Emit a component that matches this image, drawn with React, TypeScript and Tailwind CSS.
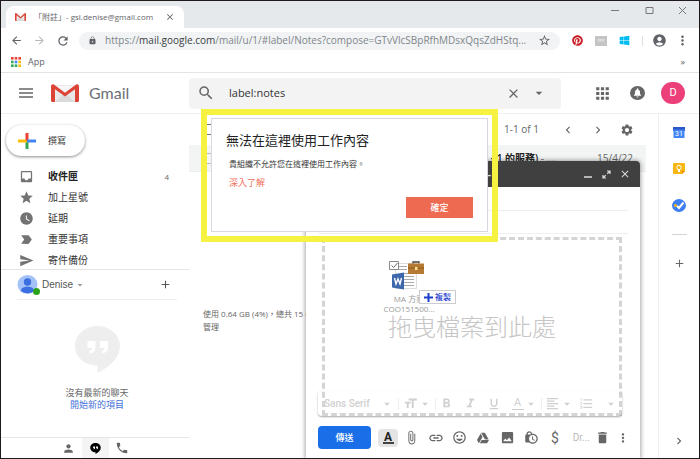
import type { ReactNode } from "react";
import {
  MdAccountCircle, MdAdd, MdApps, MdArrowBack, MdArrowDropDown, MdArrowForward, MdAttachFile,
  MdChevronLeft, MdChevronRight, MdClose, MdDelete, MdFormatAlignLeft, MdFormatBold,
  MdFormatItalic, MdFormatListNumbered, MdFormatSize, MdFormatUnderlined, MdImage, MdInbox,
  MdLabelImportant, MdLink, MdLock, MdLockClock, MdMoreVert, MdOutlineInsertEmoticon, MdPerson,
  MdPhone, MdRefresh, MdSearch, MdSend, MdSettings, MdStar, MdStarBorder, MdWatchLater,
} from "react-icons/md";
import { FaGoogleDrive, FaPinterest, FaWindows } from "react-icons/fa";

const UI = "font-['Open_Sans','Noto_Sans_CJK_TC',sans-serif]";

function IconButton({ label, className = "", children }: { label: string; className?: string; children: ReactNode }) {
  return (
    <button type="button" aria-label={label} className={`flex shrink-0 items-center justify-center ${className}`}>
      {children}
    </button>
  );
}

function GmailMark({ className }: { className: string }) {
  return (
    <svg viewBox="0 0 28 18" preserveAspectRatio="none" className={className} aria-hidden="true">
      <path d="M2 1h24v17H2z" fill="#e9e9e9" />
      <path d="M4 18 14 9l10 9z" fill="#dadada" />
      <path d="M4 2h20L14 10z" fill="#f6f6f6" />
      <path d="M0 2.2C0 .4 1.8-.4 3.2.7L14 8.8 24.800.7C26.200-.4 28 .4 28 2.200V16.500c0 .9-.6 1.500-1.500 1.500H24V5.300L14 12.600 4 5.300V18H1.500C.6 18 0 17.400 0 16.500z" fill="#db4437" />
    </svg>
  );
}

function Hangouts({ className, quote }: { className: string; quote: string }) {
  return (
    <svg viewBox="0 0 45 47" className={className} aria-hidden="true">
      <path d="M22.500 0C10 0 0 8.800 0 20s10 19.500 22.500 19.500V47C35 41 45 31 45 20S35 0 22.500 0z" fill="currentColor" />
      <path d="M12.500 15h8v6.500c0 3.500-2 5.500-6 5.500v-2.500c1.500 0 2.500-.8 2.500-2.500h-4.500zM25 15h8v6.500c0 3.500-2 5.500-6 5.500v-2.500c1.500 0 2.500-.8 2.500-2.500H25z" fill={quote} />
    </svg>
  );
}

function AppsGrid() {
  const colors = ["#ea4335", "#ea4335", "#ea4335", "#34a853", "#4285f4", "#fbbc05", "#34a853", "#34a853", "#fbbc05"];
  return (
    <svg viewBox="0 0 10 10" className="size-[10px]" aria-hidden="true">
      {colors.map((c, i) => (
        <rect key={i} x={(i % 3) * 3.7} y={Math.floor(i / 3) * 3.7} width="2.600" height="2.600" fill={c} />
      ))}
    </svg>
  );
}

function BrowserChrome() {
  return (
    <>
      <div className="flex h-[27px] items-end bg-[#e6e9ec] pl-[5px]">
        <div className="flex h-[22px] w-[178px] items-center rounded-t-lg bg-white px-[9px] text-[8px] text-[#5f6368]">
          <GmailMark className="mr-2 h-2 w-[11px]" />
          <span className="flex-1 whitespace-nowrap">「附註」- gsl.denise@gmail.com</span>
          <IconButton label="關閉分頁"><MdClose className="size-[10px]" /></IconButton>
        </div>
        <div className="ml-auto flex h-[22px] w-[88px] items-start justify-between pr-3 text-[#777]">
          <IconButton label="最小化" className="size-[9px]">
            <svg viewBox="0 0 9 9" className="size-[9px]"><path d="M0 4.500h8" stroke="currentColor" /></svg>
          </IconButton>
          <IconButton label="最大化" className="size-[9px]">
            <svg viewBox="0 0 9 9" className="size-[9px]" fill="none"><path d="M1 1.500h7v6H1z" stroke="currentColor" /></svg>
          </IconButton>
          <IconButton label="關閉" className="size-[9px]">
            <svg viewBox="0 0 9 9" className="size-[9px]"><path d="m1 1 7 7M8 1 1 8" stroke="currentColor" /></svg>
          </IconButton>
        </div>
      </div>
      <div className="flex h-[25px] items-center pr-[9px] pl-[7px] text-[#5f6368]">
        <IconButton label="上一頁" className="w-4"><MdArrowBack className="size-[13px]" /></IconButton>
        <IconButton label="下一頁" className="ml-[7px] w-4 text-[#bbb]"><MdArrowForward className="size-[13px]" /></IconButton>
        <IconButton label="重新載入" className="ml-2 w-4"><MdRefresh className="size-[14px]" /></IconButton>
        <div className="ml-2 flex h-[18px] min-w-0 flex-1 items-center rounded-full bg-[#f1f3f4] px-[9px] text-[10px] text-[#80868b]">
          <MdLock className="mr-2 size-[9px] shrink-0 text-[#5f6368]" />
          <span className="flex-1 truncate">
            https://<span className="text-[#3c4043]">mail.google.com</span>/mail/u/1/#label/Notes?compose=GTvVlcSBpRfhMDsxQqsZdHStq...
          </span>
          <IconButton label="加入書籤"><MdStarBorder className="size-[13px] text-[#5f6368]" /></IconButton>
        </div>
        <IconButton label="Pinterest" className="ml-3"><FaPinterest className="size-[11px] text-[#cb1f27]" /></IconButton>
        <IconButton label="擴充功能" className="ml-3 h-[10px] w-3 bg-[#c4c4c4] text-[4px] text-white">PPP</IconButton>
        <IconButton label="Windows" className="ml-3"><FaWindows className="size-[11px] text-[#00bcf2]" /></IconButton>
        <span className="ml-3 h-[10px] w-px bg-[#ddd]" />
        <IconButton label="使用者" className="ml-[9px]"><MdAccountCircle className="size-[15px]" /></IconButton>
        <IconButton label="更多" className="ml-2"><MdMoreVert className="size-[15px]" /></IconButton>
      </div>
      <div className="flex h-5 items-start border-b border-[#e3e3e3] pt-px pr-[14px] pl-[10px] text-[9px] leading-[15px] text-[#5f6368]">
        <a href="#apps" className="flex items-center gap-[7px]"><AppsGrid />App</a>
        <span className="ml-auto">»</span>
      </div>
    </>
  );
}

function Header() {
  return (
    <header className="flex h-[41px] items-center border-b border-[#f0f0f0] pr-[14px] text-[#666]">
      <div className="flex w-[188px] shrink-0 items-center">
        <IconButton label="主選單" className="ml-[18px]">
          <svg viewBox="0 0 14 10" className="h-[10px] w-[14px]"><path d="M0 1h14M0 5h14M0 9h14" stroke="currentColor" strokeWidth="1.500" /></svg>
        </IconButton>
        <GmailMark className="ml-[18px] h-[18px] w-7" />
        <span className="ml-[10px] font-[Lato,sans-serif] text-[16px] text-[#6b6f75]">Gmail</span>
      </div>
      <div className="flex h-[31px] max-w-[372px] min-w-0 flex-1 items-center rounded-sm bg-[#f3f3f3] pr-[14px] pl-2">
        <IconButton label="搜尋"><MdSearch className="size-[18px]" /></IconButton>
        <input aria-label="搜尋郵件" defaultValue="label:notes" className="ml-[14px] min-w-0 flex-1 bg-transparent text-[11px] text-[#333] outline-none" />
        <IconButton label="清除搜尋"><MdClose className="size-[15px]" /></IconButton>
        <IconButton label="搜尋選項" className="ml-[10px]"><MdArrowDropDown className="size-4" /></IconButton>
      </div>
      <IconButton label="Google 應用程式" className="ml-auto"><MdApps className="size-[19px]" /></IconButton>
      <IconButton label="通知" className="ml-[18px]">
        <svg viewBox="0 0 15 14" className="h-[14px] w-[15px]">
          <ellipse cx="7.500" cy="7" rx="7.500" ry="7" fill="currentColor" />
          <path d="M4 9.800V9l1-1V6.200c0-1.400.7-2.400 1.800-2.800V3a.7.7 0 0 1 1.400 0v.4C9.300 3.800 10 4.800 10 6.200V8l1 1v.8zM6.500 10.500h2a1 1 0 0 1-2 0z" fill="#fff" />
        </svg>
      </IconButton>
      <IconButton label="帳戶" className="ml-4 h-[22px] w-6 rounded-full bg-[#ec407a] font-[Roboto,sans-serif] text-[11px] text-white">D</IconButton>
    </header>
  );
}

const folders = [
  { icon: MdInbox, name: "收件匣", count: 4 },
  { icon: MdStar, name: "加上星號" },
  { icon: MdWatchLater, name: "延期" },
  { icon: MdLabelImportant, name: "重要事項" },
  { icon: MdSend, name: "寄件備份" },
];

function Sidebar() {
  return (
    <aside className="flex w-[188px] shrink-0 flex-col">
      <button type="button" className="mt-[11px] ml-[5px] flex h-[31px] w-[79px] items-center rounded-full bg-white pl-3 text-[9px] text-[#333] shadow-[0_1px_3px_rgba(0,0,0,0.45)]">
        <svg viewBox="0 0 18 16" className="mr-3 h-4 w-[18px]">
          <path d="M7.500 0h3v8h-3z" fill="#ea4335" />
          <path d="M7.500 8h3v8h-3z" fill="#34a853" />
          <path d="M0 6.500h7.500L10 9.500H0z" fill="#fbbc05" />
          <path d="M9 6.500h9v3H9z" fill="#4285f4" />
        </svg>
        撰寫
      </button>
      <nav className="mt-[10px] h-[103px] overflow-hidden pr-5 pl-[18px] text-[10px] text-[#333]">
        {folders.map(({ icon: Icon, name, count }) => (
          <a key={name} href="#folder" className={count ? "flex h-[21px] items-center font-bold text-[#222]" : "flex h-[21px] items-center"}>
            <Icon className="mr-[14px] size-[15px] text-[#737373]" />
            <span>{name}</span>
            {count && <span className="ml-auto text-[8px] font-normal text-[#666]">{count}</span>}
          </a>
        ))}
      </nav>
      <section className="flex flex-1 flex-col border-t border-[#e4e4e4]">
        <div className="mr-3 ml-4 flex h-[30px] items-center border-b border-[#eee] font-[Liberation_Sans,sans-serif] text-[10px] text-[#555]">
          <svg viewBox="0 0 24 20" className="mr-px h-5 w-6">
            <ellipse cx="10.500" cy="9.500" rx="10" ry="9.500" fill="#a4c2f7" />
            <circle cx="10.500" cy="7" r="3.700" fill="#3b6fe0" />
            <path d="M4 16c0-3 3-4.200 6.500-4.200S17 13 17 16a10 9.500 0 0 1-13 0z" fill="#3b6fe0" />
            <circle cx="19.500" cy="16.500" r="3.500" fill="#2ba319" />
          </svg>
          Denise
          <MdArrowDropDown className="ml-px size-3 text-[#999]" />
          <IconButton label="新增對話" className="mr-[5px] ml-auto"><MdAdd className="size-[13px]" /></IconButton>
        </div>
        <div className="flex flex-1 flex-col items-center pt-[26px] pl-1 text-[9px] leading-3 text-[#666]">
          <Hangouts className="mb-[14px] h-[47px] w-[45px] text-[#eee]" quote="#fff" />
          <p>沒有最新的聊天</p>
          <a href="#chat" className="text-[#3f6fd8]">開始新的項目</a>
        </div>
        <div className="flex h-[21px] justify-center border-t border-[#e6e6e6] text-[#666]">
          <IconButton label="聯絡人" className="w-[27px]"><MdPerson className="size-[13px]" /></IconButton>
          <IconButton label="對話" className="w-[27px] bg-[#f4f4f4] text-black"><Hangouts className="size-[11px]" quote="#fff" /></IconButton>
          <IconButton label="電話" className="w-[27px]"><MdPhone className="size-[14px]" /></IconButton>
        </div>
      </section>
    </aside>
  );
}

function MailList() {
  return (
    <main className="min-w-0 flex-1 text-[10px] text-[#666]">
      <div className="flex h-[31px] items-center pr-6 pl-[14px]">
        <input type="checkbox" aria-label="全選" className="size-[11px] appearance-none border border-[#777]" />
        <span className="mr-[22px] ml-auto">1-1 of 1</span>
        <IconButton label="較新" className="mr-4"><MdChevronLeft className="size-[14px]" /></IconButton>
        <IconButton label="較舊" className="mr-[15px]"><MdChevronRight className="size-[14px]" /></IconButton>
        <IconButton label="設定"><MdSettings className="size-[14px]" /></IconButton>
      </div>
      <div className="mr-3 flex h-[27px] items-center border-b border-[#eceeee] bg-[#f3f5f5] pr-[13px] pl-[14px]">
        <input type="checkbox" aria-label="選取郵件" className="size-[11px] appearance-none border border-[#bbb]" />
        <span className="mr-10 ml-auto"><b className="font-semibold text-[#222]">- 1 的服務)</b> - ....</span>
        <span>15/4/22</span>
      </div>
      <p className="mt-[135px] pl-[14px] text-[8px] leading-[13px] whitespace-nowrap">
        使用 0.64 GB (4%)，總共 15 GB<br />管理
      </p>
    </main>
  );
}

function SidePanel() {
  return (
    <aside className="flex w-[41px] shrink-0 flex-col items-center border-l border-[#eee] pt-[13px] text-[#666]">
      <IconButton label="日曆">
        <svg viewBox="0 0 12 11" className="h-[11px] w-3">
          <path d="M0 0h12v4H0z" fill="#2a56c6" /><path d="M.5 2.500h11V11H.5z" fill="#4285f4" />
          <text x="6" y="9" textAnchor="middle" fontSize="7" fill="#fff" fontFamily="Roboto">31</text>
        </svg>
      </IconButton>
      <IconButton label="Keep" className="mt-[25px]">
        <svg viewBox="0 0 12 11" className="h-[11px] w-3">
          <path d="M1 0h10a1 1 0 0 1 1 1v7L9 11H1a1 1 0 0 1-1-1V1a1 1 0 0 1 1-1z" fill="#f9b712" />
          <path d="M12 8 9 11V8z" fill="#f08c00" />
          <circle cx="6" cy="4.500" r="2.200" fill="none" stroke="#fff" /><path d="M5 7h2v2H5z" fill="#fff" />
        </svg>
      </IconButton>
      <IconButton label="Tasks" className="mt-[25px]">
        <svg viewBox="0 0 14 13" className="h-[13px] w-[14px]">
          <ellipse cx="7" cy="6.500" rx="7" ry="6.500" fill="#3f7ef0" />
          <path d="m5 7 2 2 4.500-5.500" stroke="#fff" strokeWidth="2" fill="none" /><circle cx="3.500" cy="6.500" r="1.500" fill="#fbbc05" />
        </svg>
      </IconButton>
      <hr className="mt-[22px] w-[15px] border-[#d4d4d4]" />
      <IconButton label="取得外掛程式" className="mt-[22px]"><MdAdd className="size-[13px]" /></IconButton>
      <IconButton label="隱藏側邊面板" className="mt-auto mb-[10px]"><MdChevronRight className="size-[14px]" /></IconButton>
    </aside>
  );
}

function FileGhost() {
  return (
    <div className="absolute top-5 left-[54px] w-[60px] text-center text-[8px] leading-[10px] text-[#999]">
      <svg viewBox="0 0 36 31" className="ml-[10px] h-[31px] w-9" fill="none" aria-hidden="true">
        <path d="M6.500 3.500h21v25h-21z" fill="#fff" stroke="#ddd" />
        <path d="M9 6.500h9M9 9.500h9M15 13.500h10M15 16.500h10M15 19.500h10M15 22.500h10M15 25.500h10" stroke="#a9a9a9" />
        <path d="M.5 1.500h9v8h-9z" fill="#fff" stroke="#888" /><path d="m2.500 5.500 2 2 4-4.500" stroke="#666" />
        <path d="M3 14.500 15 12.500v17L3 27.500z" fill="#3d68ac" />
        <path d="m5.500 18 1.500 6 2-5 2 5 1.500-6" stroke="#fff" strokeWidth="1.400" />
        <path d="M24 3.500V2h6v1.500" stroke="#444" strokeWidth="1.400" />
        <path d="M19 3.500h16V14H19z" fill="#b57a33" /><path d="M19 8h16" stroke="#8f5c22" /><path d="M26 7h2.500v3H26z" fill="#ffe08a" />
      </svg>
      <p className="mt-[3px]">MA 方案</p>
      <p>COO151500...</p>
      <span className="absolute top-[30px] left-10 flex h-[14px] w-[37px] items-center justify-center gap-[2px] border border-[#ccc] bg-white text-[8px] font-medium text-[#1f3fd0]">
        <svg viewBox="0 0 9 9" className="size-[9px]"><path d="M4.500 0v9M0 4.500h9" stroke="#1f3fd0" strokeWidth="2" /></svg>
        複製
      </span>
    </div>
  );
}

function ComposeWindow() {
  return (
    <section className="absolute right-[59px] bottom-0 flex h-[297px] w-[334px] flex-col rounded-t-sm bg-white shadow-[0_0_4px_1px_rgba(0,0,0,0.35)]">
      <div className="flex h-[26px] shrink-0 items-center rounded-t-sm bg-[#404040] pr-[9px] text-[#ddd]">
        <span className="mr-[93px] ml-auto text-[11px] font-bold">-</span>
        <IconButton label="最小化"><svg viewBox="0 0 9 10" className="h-[10px] w-[9px]"><path d="M0 8h8" stroke="currentColor" strokeWidth="1.500" /></svg></IconButton>
        <IconButton label="全螢幕" className="ml-[9px]">
          <svg viewBox="0 0 9 9" className="size-[9px]" fill="none"><path d="M5 1h3v3M8 1 5.200 3.800M4 8H1V5M1 8l2.800-2.800" stroke="currentColor" strokeWidth="1.200" /></svg>
        </IconButton>
        <IconButton label="關閉" className="ml-2"><MdClose className="size-3" /></IconButton>
      </div>
      <div className="mx-3 h-6 shrink-0 border-b border-[#eee]" />
      <div className="mx-3 h-[23px] shrink-0 border-b border-[#eee]" />
      <div className="relative mt-[3px] mr-[18px] ml-4 flex h-[179px] shrink-0 items-center justify-center border-[3px] border-dashed border-[#d4d4d4]">
        <span className="text-[24px] font-light text-[#c6c6c6]">拖曳檔案到此處</span>
        <FileGhost />
        <div className="absolute -right-[3px] -bottom-[3px] -left-[7px] flex h-[25px] items-center rounded-sm pr-1 pl-[6px] font-[Roboto,sans-serif] text-[10px] text-[#d0d0d0] shadow-[0_1px_2px_rgba(0,0,0,0.35)]">
          <span className="font-medium">Sans Serif</span>
          <MdArrowDropDown className="ml-[10px] size-[14px]" />
          <span className="mx-1 h-3 w-px bg-[#eee]" />
          <MdFormatSize className="size-[15px]" />
          <MdArrowDropDown className="size-[14px]" />
          <span className="mx-[3px] h-3 w-px bg-[#eee]" />
          <MdFormatBold className="size-[15px]" />
          <MdFormatItalic className="ml-[9px] size-[15px]" />
          <MdFormatUnderlined className="ml-[9px] size-[14px]" />
          <span className="ml-[11px] h-[13px] w-3 border-b border-[#ccc] text-center text-[11px] leading-3">A</span>
          <MdArrowDropDown className="size-[14px]" />
          <span className="mx-[3px] h-3 w-px bg-[#eee]" />
          <MdFormatAlignLeft className="size-[15px]" />
          <MdArrowDropDown className="size-[14px]" />
          <MdFormatListNumbered className="ml-[5px] size-[15px]" />
          <MdArrowDropDown className="ml-auto size-[14px]" />
        </div>
      </div>
      <div className="flex flex-1 items-center pt-px pr-[10px] pl-3 text-[#666]">
        <button type="button" className="h-[23px] w-[53px] rounded-sm bg-[#1a6fe8] text-[9px] font-medium text-white">傳送</button>
        <IconButton label="格式設定選項" className="mr-[2px] ml-[7px] h-[18px] w-5 rounded-sm bg-[#e4e4e4]">
          <span className="h-3 w-[11px] border-b-2 border-[#444] font-[Roboto,sans-serif] text-[12px] leading-[10px] font-bold text-[#222]">A</span>
        </IconButton>
        <div className="grid flex-1 grid-cols-7">
          <IconButton label="附加檔案"><MdAttachFile className="size-[15px]" /></IconButton>
          <IconButton label="插入連結"><MdLink className="size-[16px]" /></IconButton>
          <IconButton label="插入表情符號"><MdOutlineInsertEmoticon className="size-[15px]" /></IconButton>
          <IconButton label="雲端硬碟"><FaGoogleDrive className="size-3" /></IconButton>
          <IconButton label="插入相片"><MdImage className="size-[15px]" /></IconButton>
          <IconButton label="機密模式"><MdLockClock className="size-[15px]" /></IconButton>
          <IconButton label="傳送款項" className="font-[Roboto,sans-serif] text-[14px] leading-4">$</IconButton>
        </div>
        <span className="mr-[5px] ml-[6px] font-[Roboto,sans-serif] text-[10px] text-[#bbb]">Dr...</span>
        <IconButton label="捨棄草稿" className="mr-[6px]"><MdDelete className="size-[15px]" /></IconButton>
        <IconButton label="更多選項"><MdMoreVert className="size-[14px]" /></IconButton>
      </div>
    </section>
  );
}

function BlockedDialog() {
  return (
    <div className="absolute top-[108px] left-[200px] h-[133px] w-[297px] border-[6px] border-[#f5f242] px-1 pt-[3px] pb-1">
      <div role="dialog" aria-labelledby="dialog-title" className="flex h-full flex-col items-start border border-[#d8d9e0] bg-white pr-[14px] pb-[13px] pl-[14px]">
        <h2 id="dialog-title" className="mt-3 text-[13px] leading-[18px] text-[#222]">無法在這裡使用工作內容</h2>
        <p className="mt-[9px] ml-[3px] text-[8px] leading-3 text-[#333]">貴組織不允許您在這裡使用工作內容。</p>
        <a href="#more" className="mt-[6px] ml-[3px] text-[9px] leading-[14px] text-[#f0705c]">深入了解</a>
        <button type="button" className="mt-auto h-[21px] w-[67px] self-end bg-[#ee6a50] text-[9px] font-medium text-white">確定</button>
      </div>
    </div>
  );
}

export default function App() {
  return (
    <div className={`relative flex min-h-screen w-full flex-col overflow-hidden border border-[#1e1a1c] bg-white ${UI}`}>
      <BrowserChrome />
      <Header />
      <div className="flex flex-1">
        <Sidebar />
        <MailList />
        <SidePanel />
      </div>
      <ComposeWindow />
      <BlockedDialog />
    </div>
  );
}
